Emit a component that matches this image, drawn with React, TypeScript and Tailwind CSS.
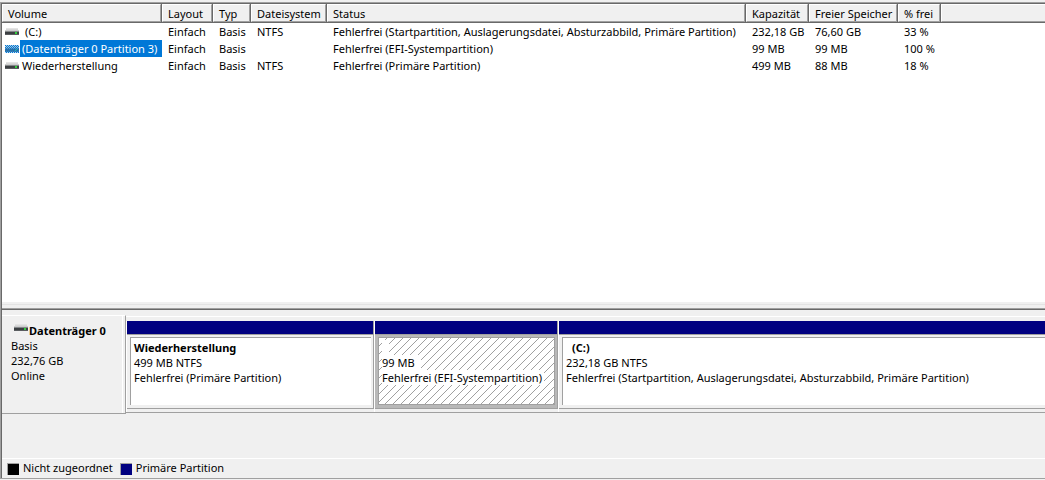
import { type ReactNode } from "react";

const columns = [
  { label: "Volume", width: "w-[160px]" },
  { label: "Layout", width: "w-[51px]" },
  { label: "Typ", width: "w-[38px]" },
  { label: "Dateisystem", width: "w-[76px]" },
  { label: "Status", width: "w-[419px]" },
  { label: "Kapazität", width: "w-[63px]" },
  { label: "Freier Speicher", width: "w-[89px]" },
  { label: "% frei", width: "w-[43px]" },
];

const volumes = [
  {
    name: "(C:)",
    indent: true,
    selected: false,
    cells: ["Einfach", "Basis", "NTFS", "Fehlerfrei (Startpartition, Auslagerungsdatei, Absturzabbild, Primäre Partition)", "232,18 GB", "76,60 GB", "33 %"],
  },
  {
    name: "(Datenträger 0 Partition 3)",
    indent: false,
    selected: true,
    cells: ["Einfach", "Basis", "", "Fehlerfrei (EFI-Systempartition)", "99 MB", "99 MB", "100 %"],
  },
  {
    name: "Wiederherstellung",
    indent: false,
    selected: false,
    cells: ["Einfach", "Basis", "NTFS", "Fehlerfrei (Primäre Partition)", "499 MB", "88 MB", "18 %"],
  },
];

function DriveIcon({ selected = false }: { selected?: boolean }) {
  return (
    <svg width="14" height="8" viewBox="0 0 14 8" className="block shrink-0" shapeRendering="crispEdges" aria-hidden="true">
      <defs>
        <pattern id="dither" width="2" height="2" patternUnits="userSpaceOnUse">
          <rect width="1" height="1" fill="#0078d7" />
          <rect x="1" y="1" width="1" height="1" fill="#0078d7" />
        </pattern>
      </defs>
      <rect x="1" y="0" width="12" height="1" fill="#e4e4e4" />
      <rect x="1" y="1" width="12" height="1" fill="#d8d8d8" />
      <rect x="0" y="2" width="14" height="1" fill="#cccdce" />
      <rect x="0" y="3" width="14" height="1" fill="#85888a" />
      <rect x="0" y="4" width="14" height="2" fill="#3c3f42" />
      <rect x="0" y="6" width="14" height="1" fill="#5a5d60" />
      <rect x="10" y="4" width="2" height="2" fill="#2fd03c" />
      {selected && <rect width="14" height="8" fill="#5aa9e6" opacity="0.4" />}
      {selected && <rect width="14" height="8" fill="url(#dither)" />}
    </svg>
  );
}

function HeaderCell({ label }: { label: string }) {
  return (
    <button type="button" className="block h-[18px] w-full border-t border-l border-r border-b border-t-white border-l-white border-r-[#a0a0a0] border-b-[#a0a0a0] pl-[5px] text-left leading-[18px] whitespace-nowrap">
      {label}
    </button>
  );
}

function Hatch() {
  return (
    <svg className="absolute inset-0 h-full w-full" shapeRendering="crispEdges" aria-hidden="true">
      <defs>
        <pattern id="hatch" width="8" height="8" patternUnits="userSpaceOnUse">
          {[0, 1, 2, 3, 4, 5, 6, 7].map((i) => (
            <rect key={i} x={i} y={7 - i} width="1" height="1" fill="#a0a0a0" />
          ))}
        </pattern>
      </defs>
      <rect width="100%" height="100%" fill="url(#hatch)" />
    </svg>
  );
}

function Partition({ width, title, indent, size, status, selected, clipped }: {
  width: string;
  title?: string;
  indent?: boolean;
  size: ReactNode;
  status: string;
  selected?: boolean;
  clipped?: boolean;
}) {
  return (
    <div className={`${width} flex flex-col border-l border-l-white`}>
      <div className={`h-[13px] border-[#a0a0a0] bg-[#000080] ${clipped ? "" : "border-r"}`} />
      <div className={`flex h-[75px] border-t border-b border-[#a0a0a0] pt-[2px] pb-[3px] pl-[3px] ${clipped ? "" : "border-r pr-[2px]"} ${selected ? "bg-[#b8b8b8]" : "bg-[#f0f0f0]"}`}>
        <div className={`relative min-w-0 flex-1 border-t border-l border-[#a0a0a0] bg-white pt-[2px] pl-[3px] leading-[15px] whitespace-nowrap ${selected ? "border-r border-b" : ""}`}>
          {selected && <Hatch />}
          <div className="relative">
            <div className={`h-[15px] font-bold ${indent ? "pl-[6px]" : ""}`}>
              <span className="inline-block h-[15px] min-w-[7px] bg-white">{title}</span>
            </div>
            <div className="h-[15px]"><span className="inline-block bg-white pr-[6px]">{size}</span></div>
            <div className="h-[15px]"><span className="inline-block bg-white pr-[2px]">{status}</span></div>
          </div>
        </div>
      </div>
    </div>
  );
}

export default function App() {
  return (
    <div className="flex h-screen min-h-[420px] flex-col overflow-hidden bg-[#f0f0f0] pt-[2px] pb-[1px] font-['Noto_Sans',sans-serif] text-[11px] text-black">
      <main className="flex min-h-0 flex-1 flex-col border-t border-l border-b border-[#a0a0a0]">
        <div className="flex min-h-0 flex-1 flex-col border-t border-l border-[#696969]">
          <section aria-label="Volumes" className="min-h-0 flex-1 overflow-hidden bg-white">
            <table className="w-full table-fixed border-collapse">
              <thead>
                <tr className="bg-[#f0f0f0]">
                  {columns.map((c) => (
                    <th key={c.label} scope="col" className={`${c.width} p-0 font-normal`}>
                      <div className="border-r border-b border-[#696969]">
                        <HeaderCell label={c.label} />
                      </div>
                    </th>
                  ))}
                  <td className="p-0">
                    <div className="h-[19px] border-b border-[#696969]">
                      <div className="h-[18px] border-t border-l border-b border-t-white border-l-white border-b-[#a0a0a0]" />
                    </div>
                  </td>
                </tr>
              </thead>
              <tbody>
                {volumes.map((v) => (
                  <tr key={v.name} className="h-[17px] leading-[17px] whitespace-nowrap">
                    <td className="p-0">
                      <div className="flex items-center pl-[3px]">
                        <DriveIcon selected={v.selected} />
                        <span className={`ml-px h-[17px] ${v.indent ? "pl-[5px]" : "pl-[2px]"} ${v.selected ? "flex-1 bg-[#0078d7] text-white" : ""}`}>{v.name}</span>
                      </div>
                    </td>
                    {v.cells.map((cell, i) => (
                      <td key={i} className="p-0 pl-[6px]">{cell}</td>
                    ))}
                    <td className="p-0" />
                  </tr>
                ))}
              </tbody>
            </table>
          </section>

          <div role="separator" className="flex h-[8px] flex-col justify-between border-b border-[#696969]">
            <div className="mt-[2px] h-px bg-[#e3e3e3]" />
            <div className="h-px bg-[#a0a0a0]" />
          </div>

          <section aria-label="Datenträger" className="h-[148px] pt-[5px]">
            <div className="flex h-[99px]">
              <div className="w-[124px] border-t border-r border-b border-t-white border-r-[#a0a0a0] border-b-[#a0a0a0]">
                <div className="mr-[2px] h-full border-r border-white pt-[7px] pl-[9px] leading-[15px]">
                  <div className="flex pl-[3px] font-bold">
                    <div className="pt-px">
                      <DriveIcon />
                    </div>
                    <span className="ml-px">Datenträger 0</span>
                  </div>
                  <div>Basis</div>
                  <div>232,76 GB</div>
                  <div>Online</div>
                </div>
              </div>
              <div className="mt-px mb-px flex min-w-0 flex-1 border-t border-b border-t-white border-b-[#a0a0a0] pt-[4px]">
                <Partition width="w-[248px]" title="Wiederherstellung" size="499 MB NTFS" status="Fehlerfrei (Primäre Partition)" />
                <Partition width="w-[184px]" size="99 MB" status="Fehlerfrei (EFI-Systempartition)" selected />
                <Partition width="min-w-0 flex-1" title="(C:)" indent size="232,18 GB NTFS" status="Fehlerfrei (Startpartition, Auslagerungsdatei, Absturzabbild, Primäre Partition)" clipped />
              </div>
            </div>
          </section>

          <footer className="flex h-[20px] items-center border-t border-white pl-[5px]">
            <span className="size-[12px] border-t border-l border-[#a0a0a0] bg-black" />
            <span className="ml-[4px]">Nicht zugeordnet</span>
            <span className="ml-[7px] size-[12px] border-t border-l border-[#a0a0a0] bg-[#000080]" />
            <span className="ml-[4px]">Primäre Partition</span>
          </footer>
        </div>
      </main>
    </div>
  );
}
